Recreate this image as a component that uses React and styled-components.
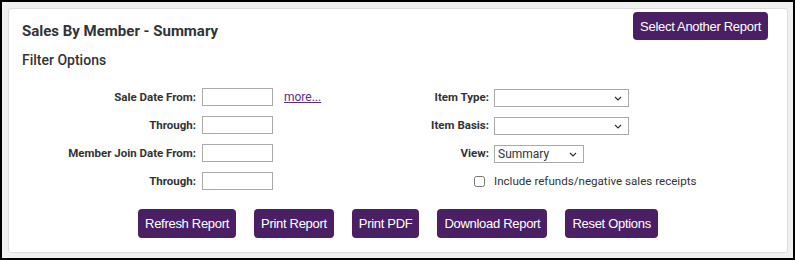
import React from "react";
import styled, { createGlobalStyle } from "styled-components";

const Global = createGlobalStyle`
  html, body { margin: 0; padding: 0; }
  body {
    width: 795px;
    height: 260px;
    box-sizing: border-box;
    border: 2px solid #000;
    background: #f0f0f0;
    font-family: Roboto, "Liberation Sans", Arial, sans-serif;
    overflow: hidden;
  }
`;

const Frame = styled.div`
  padding: 6px 5px 5px 6px;
  box-sizing: border-box;
  height: 256px;
`;

const Card = styled.div`
  box-sizing: border-box;
  height: 245px;
  background: #fff;
  border: 1px solid #dcdcdc;
  border-radius: 3px;
  padding: 3px 19px 0 13px;
  display: flex;
  flex-direction: column;
`;

const Header = styled.div`
  display: flex;
  justify-content: space-between;
  align-items: flex-start;
`;

const Title = styled.h1`
  margin: 10px 0 0;
  font-size: 15px;
  font-weight: 700;
  color: #333;
  line-height: 18px;
`;

const SubTitle = styled.h2`
  margin: 11px 0 0;
  font-size: 14px;
  font-weight: 500;
  color: #333;
  line-height: 18px;
`;

const PurpleButton = styled.button`
  background: #4a1f63;
  color: #fff;
  border: none;
  border-radius: 4px;
  height: ${(p) => p.$h || 28}px;
  padding: 0 7px;
  font-family: "Liberation Sans", Arial, sans-serif;
  font-size: 13px;
  letter-spacing: -0.3px;
  cursor: pointer;
`;

const Form = styled.div`
  display: grid;
  grid-template-columns: 378px auto;
  margin-top: 14px;
`;

const FieldGrid = styled.div`
  display: grid;
  grid-template-columns: ${(p) => p.$cols};
  grid-auto-rows: 28px;
  align-items: center;
  column-gap: ${(p) => p.$gap}px;
`;

const Label = styled.label`
  text-align: right;
  font-size: 11.5px;
  font-weight: 700;
  color: #333;
  white-space: nowrap;
`;

const TextInput = styled.input`
  box-sizing: border-box;
  width: 71px;
  height: 18px;
  border: 1px solid #aaa;
  padding: 0 3px;
  margin: 0;
`;

const Select = styled.select`
  box-sizing: border-box;
  width: ${(p) => p.$w}px;
  height: 18px;
  border: 1px solid #aaa;
  border-radius: 0;
  background: #fff;
  font-family: Roboto, "Liberation Sans", Arial, sans-serif;
  font-size: 12px;
  color: #333;
  padding: 0 3px;
  margin: 0;
  appearance: none;
  background-image: url("data:image/svg+xml;utf8,<svg xmlns='http://www.w3.org/2000/svg' width='8' height='5' viewBox='0 0 8 5'><path d='M1 1l3 3 3-3' fill='none' stroke='%23333' stroke-width='1.2'/></svg>");
  background-repeat: no-repeat;
  background-position: right 6px center;
`;

const MoreLink = styled.a`
  font-size: 12px;
  color: #5b2d86;
  text-decoration: underline;
  margin-left: 5px;
`;

const CheckCell = styled.div`
  display: flex;
  justify-content: flex-end;
  padding-right: 4px;
`;

const Check = styled.input`
  margin: 0;
  width: 11px;
  height: 11px;
`;

const CheckText = styled.span`
  font-size: 11.6px;
  color: #333;
  white-space: nowrap;
`;

const Empty = styled.span``;

const Buttons = styled.div`
  display: flex;
  justify-content: center;
  gap: 18px;
  margin-top: 14px;
  padding-left: 6px;
`;

export default function App() {
  return (
    <>
      <Global />
      <Frame>
        <Card>
          <Header>
            <Title>Sales By Member - Summary</Title>
            <PurpleButton>Select Another Report</PurpleButton>
          </Header>
          <SubTitle>Filter Options</SubTitle>
          <Form>
            <FieldGrid $cols="174px 71px auto" $gap={6}>
              <Label>Sale Date From:</Label>
              <TextInput />
              <MoreLink href="#">more...</MoreLink>
              <Label>Through:</Label>
              <TextInput />
              <Empty />
              <Label>Member Join Date From:</Label>
              <TextInput />
              <Empty />
              <Label>Through:</Label>
              <TextInput />
              <Empty />
            </FieldGrid>
            <FieldGrid $cols="89px auto" $gap={5}>
              <Label>Item Type:</Label>
              <div><Select $w={135}><option></option></Select></div>
              <Label>Item Basis:</Label>
              <div><Select $w={135}><option></option></Select></div>
              <Label>View:</Label>
              <div><Select $w={90}><option>Summary</option></Select></div>
              <CheckCell><Check type="checkbox" /></CheckCell>
              <CheckText>Include refunds/negative sales receipts</CheckText>
            </FieldGrid>
          </Form>
          <Buttons>
            <PurpleButton $h={29}>Refresh Report</PurpleButton>
            <PurpleButton $h={29}>Print Report</PurpleButton>
            <PurpleButton $h={29}>Print PDF</PurpleButton>
            <PurpleButton $h={29}>Download Report</PurpleButton>
            <PurpleButton $h={29}>Reset Options</PurpleButton>
          </Buttons>
        </Card>
      </Frame>
    </>
  );
}
